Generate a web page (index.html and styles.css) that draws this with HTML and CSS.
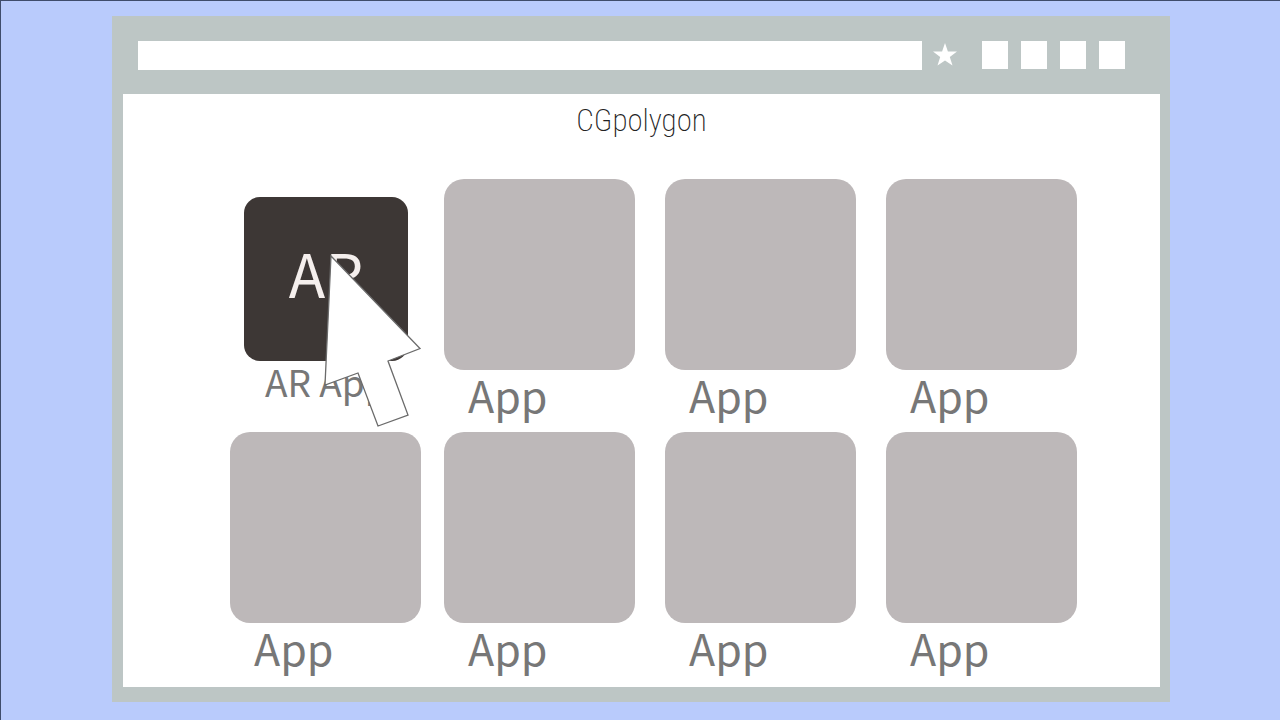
FILE: index.html
```html
<!DOCTYPE html>
<html lang="en">
<head>
    <meta charset="UTF-8">
    <meta name="viewport" content="width=device-width, initial-scale=1.0">
    <title>CGpolygon</title>
    <link rel="stylesheet" href="styles.css">
</head>
<body>
    <div class="window">
        <!-- Browser toolbar -->
        <header class="toolbar">
            <input class="address" type="text" aria-label="Address">
            <button class="star" aria-label="Bookmark">
                <svg width="24" height="24" viewBox="0 0 24 24">
                    <path fill="#fff" d="M12 0 L14.9 8.5 H24 L16.8 14 L19.5 22.5 L12 17.5 L4.5 22.5 L7.2 14 L0 8.5 H9.1 Z"/>
                </svg>
            </button>
            <div class="tools">
                <button class="tool" aria-label="Tool 1"></button>
                <button class="tool" aria-label="Tool 2"></button>
                <button class="tool" aria-label="Tool 3"></button>
                <button class="tool" aria-label="Tool 4"></button>
            </div>
        </header>

        <main class="page">
            <h1 class="title">CGpolygon</h1>

            <!-- App grid -->
            <div class="apps">
                <div class="app active">
                    <button class="tile" id="app1" aria-labelledby="name1">AR</button>
                    <label class="name" id="name1" for="app1">AR App</label>
                    <svg class="cursor" width="110" height="180" viewBox="0 0 110 180">
                        <path fill="#fff" stroke="#6b6b6b" stroke-width="1.3" d="M11 7 L100 99.5 L68 112 L88 166 L58 177 L38 124 L5 136 Z"/>
                    </svg>
                </div>
                <div class="app">
                    <button class="tile" id="app2" aria-labelledby="name2"></button>
                    <label class="name" id="name2" for="app2">App</label>
                </div>
                <div class="app">
                    <button class="tile" id="app3" aria-labelledby="name3"></button>
                    <label class="name" id="name3" for="app3">App</label>
                </div>
                <div class="app">
                    <button class="tile" id="app4" aria-labelledby="name4"></button>
                    <label class="name" id="name4" for="app4">App</label>
                </div>
                <div class="app">
                    <button class="tile" id="app5" aria-labelledby="name5"></button>
                    <label class="name" id="name5" for="app5">App</label>
                </div>
                <div class="app">
                    <button class="tile" id="app6" aria-labelledby="name6"></button>
                    <label class="name" id="name6" for="app6">App</label>
                </div>
                <div class="app">
                    <button class="tile" id="app7" aria-labelledby="name7"></button>
                    <label class="name" id="name7" for="app7">App</label>
                </div>
                <div class="app">
                    <button class="tile" id="app8" aria-labelledby="name8"></button>
                    <label class="name" id="name8" for="app8">App</label>
                </div>
            </div>
        </main>
    </div>
</body>
</html>
```
FILE: styles.css
```css
* {
    box-sizing: border-box;
}

body {
    margin: 0;
    min-height: 100vh;
    display: flex;
    padding: 15px 110px 18px 111px;
    border-top: 1px solid #3f4c6b;
    border-left: 1px solid #3f4c6b;
    background: #b9cbfc;
    font-family: "Noto Sans CJK SC", "Noto Sans", sans-serif;
}

button {
    padding: 0;
    border: none;
    cursor: pointer;
}

/* Browser window */
.window {
    flex: 1;
    display: flex;
    flex-direction: column;
    padding: 0 10px 15px 11px;
    background: #bdc6c5;
}

.toolbar {
    display: flex;
    align-items: center;
    height: 78px;
    padding: 0 35px 0 15px;
}

.address {
    flex: 1;
    min-width: 0;
    height: 29px;
    padding: 0 8px;
    border: none;
    background: #fff;
    font-size: 16px;
}

.star {
    display: flex;
    margin: 0 25px 0 11px;
    background: none;
}

.tools {
    display: flex;
    gap: 13px;
}

.tool {
    width: 26px;
    height: 28px;
    background: #fff;
}

/* Page content */
.page {
    flex: 1;
    background: #fff;
}

.title {
    margin: 0;
    padding-top: 7px;
    line-height: 40px;
    text-align: center;
    font-family: "Roboto Condensed", "Open Sans Condensed", Roboto, sans-serif;
    font-size: 31px;
    font-weight: 200;
    color: #222;
}

.apps {
    display: grid;
    grid-template-columns: 214fr 221fr 221fr 221fr;
    padding: 38px 53px 0 107px;
}

.app {
    position: relative;
    display: flex;
    flex-direction: column;
    align-items: flex-start;
    height: 253px;
}

.app:nth-child(n+5) {
    height: 246px;
}

.tile {
    width: 191px;
    max-width: 100%;
    height: 191px;
    border-radius: 20px;
    background: #bdb8b9;
}

.name {
    padding-left: 24px;
    line-height: 48px;
    font-size: 43px;
    color: #777;
}

/* Pressed app */
.active {
    padding: 18px 0 0 14px;
}

.active .tile {
    width: 164px;
    height: 164px;
    padding-bottom: 16px;
    border-radius: 16px;
    background: #3d3735;
    color: #f5efed;
    font-family: inherit;
    font-size: 60px;
}

.active .name {
    padding-left: 21px;
    line-height: 40px;
    font-size: 37px;
}

.cursor {
    position: absolute;
    top: 70px;
    left: 90px;
    pointer-events: none;
}
```
